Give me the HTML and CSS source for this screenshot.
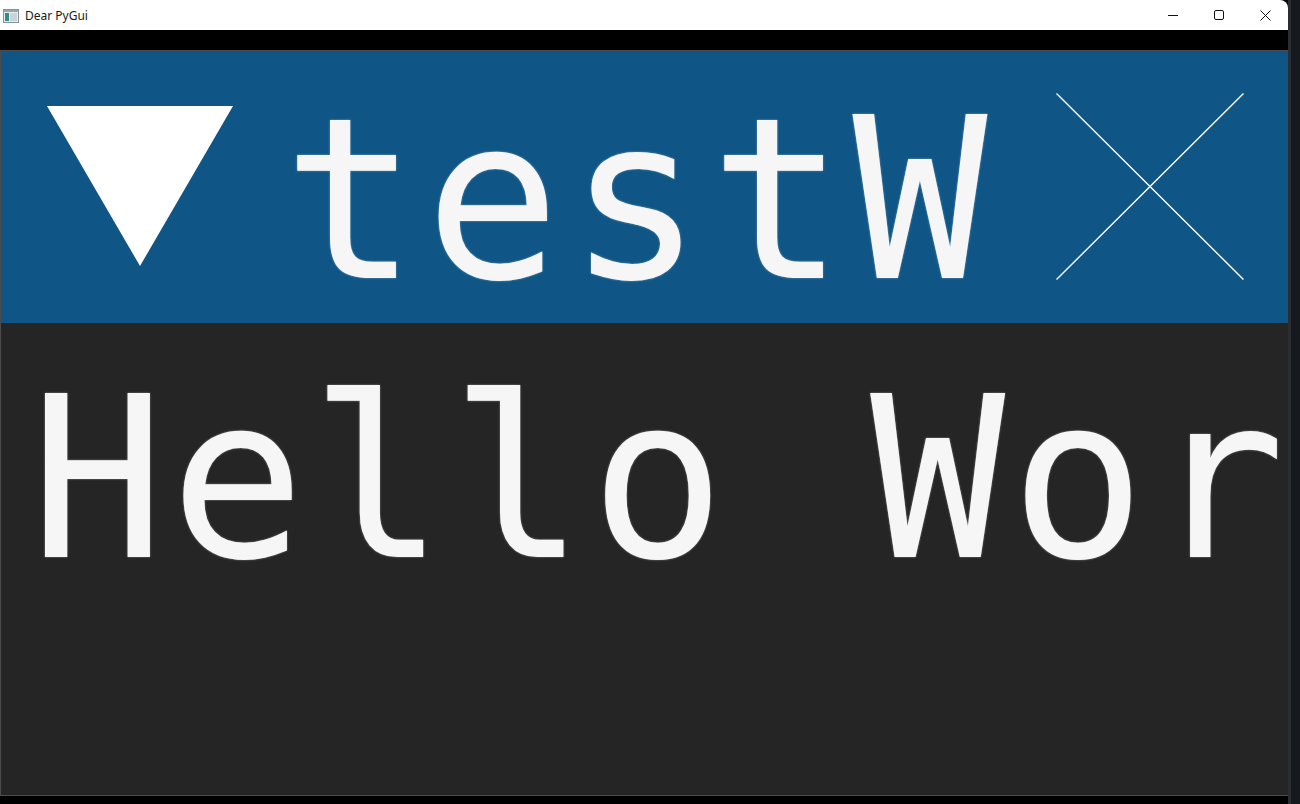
FILE: index.html
```html
<!DOCTYPE html>
<html lang="en">
  <head>
    <meta charset="UTF-8" />
    <title>Dear PyGui</title>
    <link rel="stylesheet" href="styles.css">
  </head>
  <body>
    <div class="screen">
      <div class="app">
        <div class="os-titlebar">
          <svg class="app-icon" width="16" height="14" viewBox="0 0 16 14">
            <rect x="0.5" y="0.5" width="15" height="13" fill="#e8ecef" stroke="#8a9098"/>
            <rect x="1" y="1" width="14" height="2" fill="#9aa4ad"/>
            <rect x="2" y="4" width="4" height="8" fill="#2f8f86"/>
            <rect x="7" y="4" width="7" height="8" fill="#c9d3da"/>
          </svg>
          <span class="os-title">Dear PyGui</span>
          <div class="os-controls">
            <div class="os-btn">
              <svg width="10" height="10" viewBox="0 0 10 10"><line x1="0" y1="5.5" x2="10" y2="5.5" stroke="#111" stroke-width="1"/></svg>
            </div>
            <div class="os-btn">
              <svg width="10" height="10" viewBox="0 0 10 10"><rect x="0.5" y="0.5" width="9" height="9" rx="1.5" fill="none" stroke="#111" stroke-width="1"/></svg>
            </div>
            <div class="os-btn">
              <svg width="11" height="11" viewBox="0 0 11 11"><path d="M0.5 0.5 L10.5 10.5 M10.5 0.5 L0.5 10.5" stroke="#111" stroke-width="1"/></svg>
            </div>
          </div>
        </div>

        <div class="client">
          <div class="dpg-window">
            <div class="dpg-title">
              <svg class="collapse-arrow" width="186" height="160" viewBox="0 0 186 160">
                <polygon points="0,0 186,0 93,160" fill="#fff"/>
              </svg>
              <span class="title-text">testW</span>
              <svg class="close-x" width="188" height="187" viewBox="0 0 188 187">
                <path d="M0.5 0.5 L187.5 186.5 M187.5 0.5 L0.5 186.5" stroke="#fff" stroke-width="1.4"/>
              </svg>
            </div>
            <div class="dpg-body">
              <div class="hello">Hello Wor</div>
            </div>
          </div>
        </div>
      </div>
      <div class="desktop-edge"></div>
    </div>
  </body>
</html>
```

FILE: styles.css
```css
html, body {
  margin: 0;
  padding: 0;
  background-color: #15181b;
}
body {
  width: 1300px;
  height: 804px;
  overflow: hidden;
  font-family: 'Noto Sans', 'Liberation Sans', sans-serif;
}
.screen {
  display: flex;
  height: 804px;
}
.app {
  width: 1288px;
  display: flex;
  flex-direction: column;
  background-color: #000;
}
.desktop-edge {
  flex: 1;
  background: linear-gradient(to right, #2a2d32 0 3px, #16191d 3px);
}

/* windows title bar */
.os-titlebar {
  height: 30px;
  background-color: #fff;
  border-top-right-radius: 8px;
  display: flex;
  align-items: center;
}
.app-icon {
  margin-left: 3px;
  margin-top: 1px;
}
.os-title {
  margin-left: 6px;
  font-size: 12px;
  color: #1a1a1a;
}
.os-controls {
  margin-left: auto;
  display: flex;
  height: 100%;
}
.os-btn {
  width: 46px;
  display: flex;
  align-items: center;
  justify-content: center;
}

/* dear pygui window */
.client {
  flex: 1;
  padding: 20px 0 8px;
  display: flex;
}
.dpg-window {
  flex: 1;
  display: flex;
  flex-direction: column;
  border: 1px solid #4b4b4e;
}
.dpg-title {
  height: 272px;
  flex-shrink: 0;
  background-color: #0f5687;
  display: flex;
  align-items: flex-start;
}
.collapse-arrow {
  margin-left: 46px;
  margin-top: 55px;
}
.title-text,
.hello {
  font-family: 'DejaVu Sans Mono', 'Liberation Mono', monospace;
  font-size: 224px;
  line-height: 1;
  color: #f6f6f6;
  white-space: nowrap;
  text-shadow: 0 0 2px rgba(255, 255, 255, 0.5);
}
.title-text {
  margin-left: 50px;
  margin-top: 38px;
  letter-spacing: 7.5px;
}
.close-x {
  margin-left: auto;
  margin-right: 47px;
  margin-top: 42px;
}
.dpg-body {
  flex: 1;
  background-color: #252526;
  overflow: hidden;
}
.hello {
  margin-left: 29px;
  margin-top: 45px;
  letter-spacing: 5.2px;
}
```
